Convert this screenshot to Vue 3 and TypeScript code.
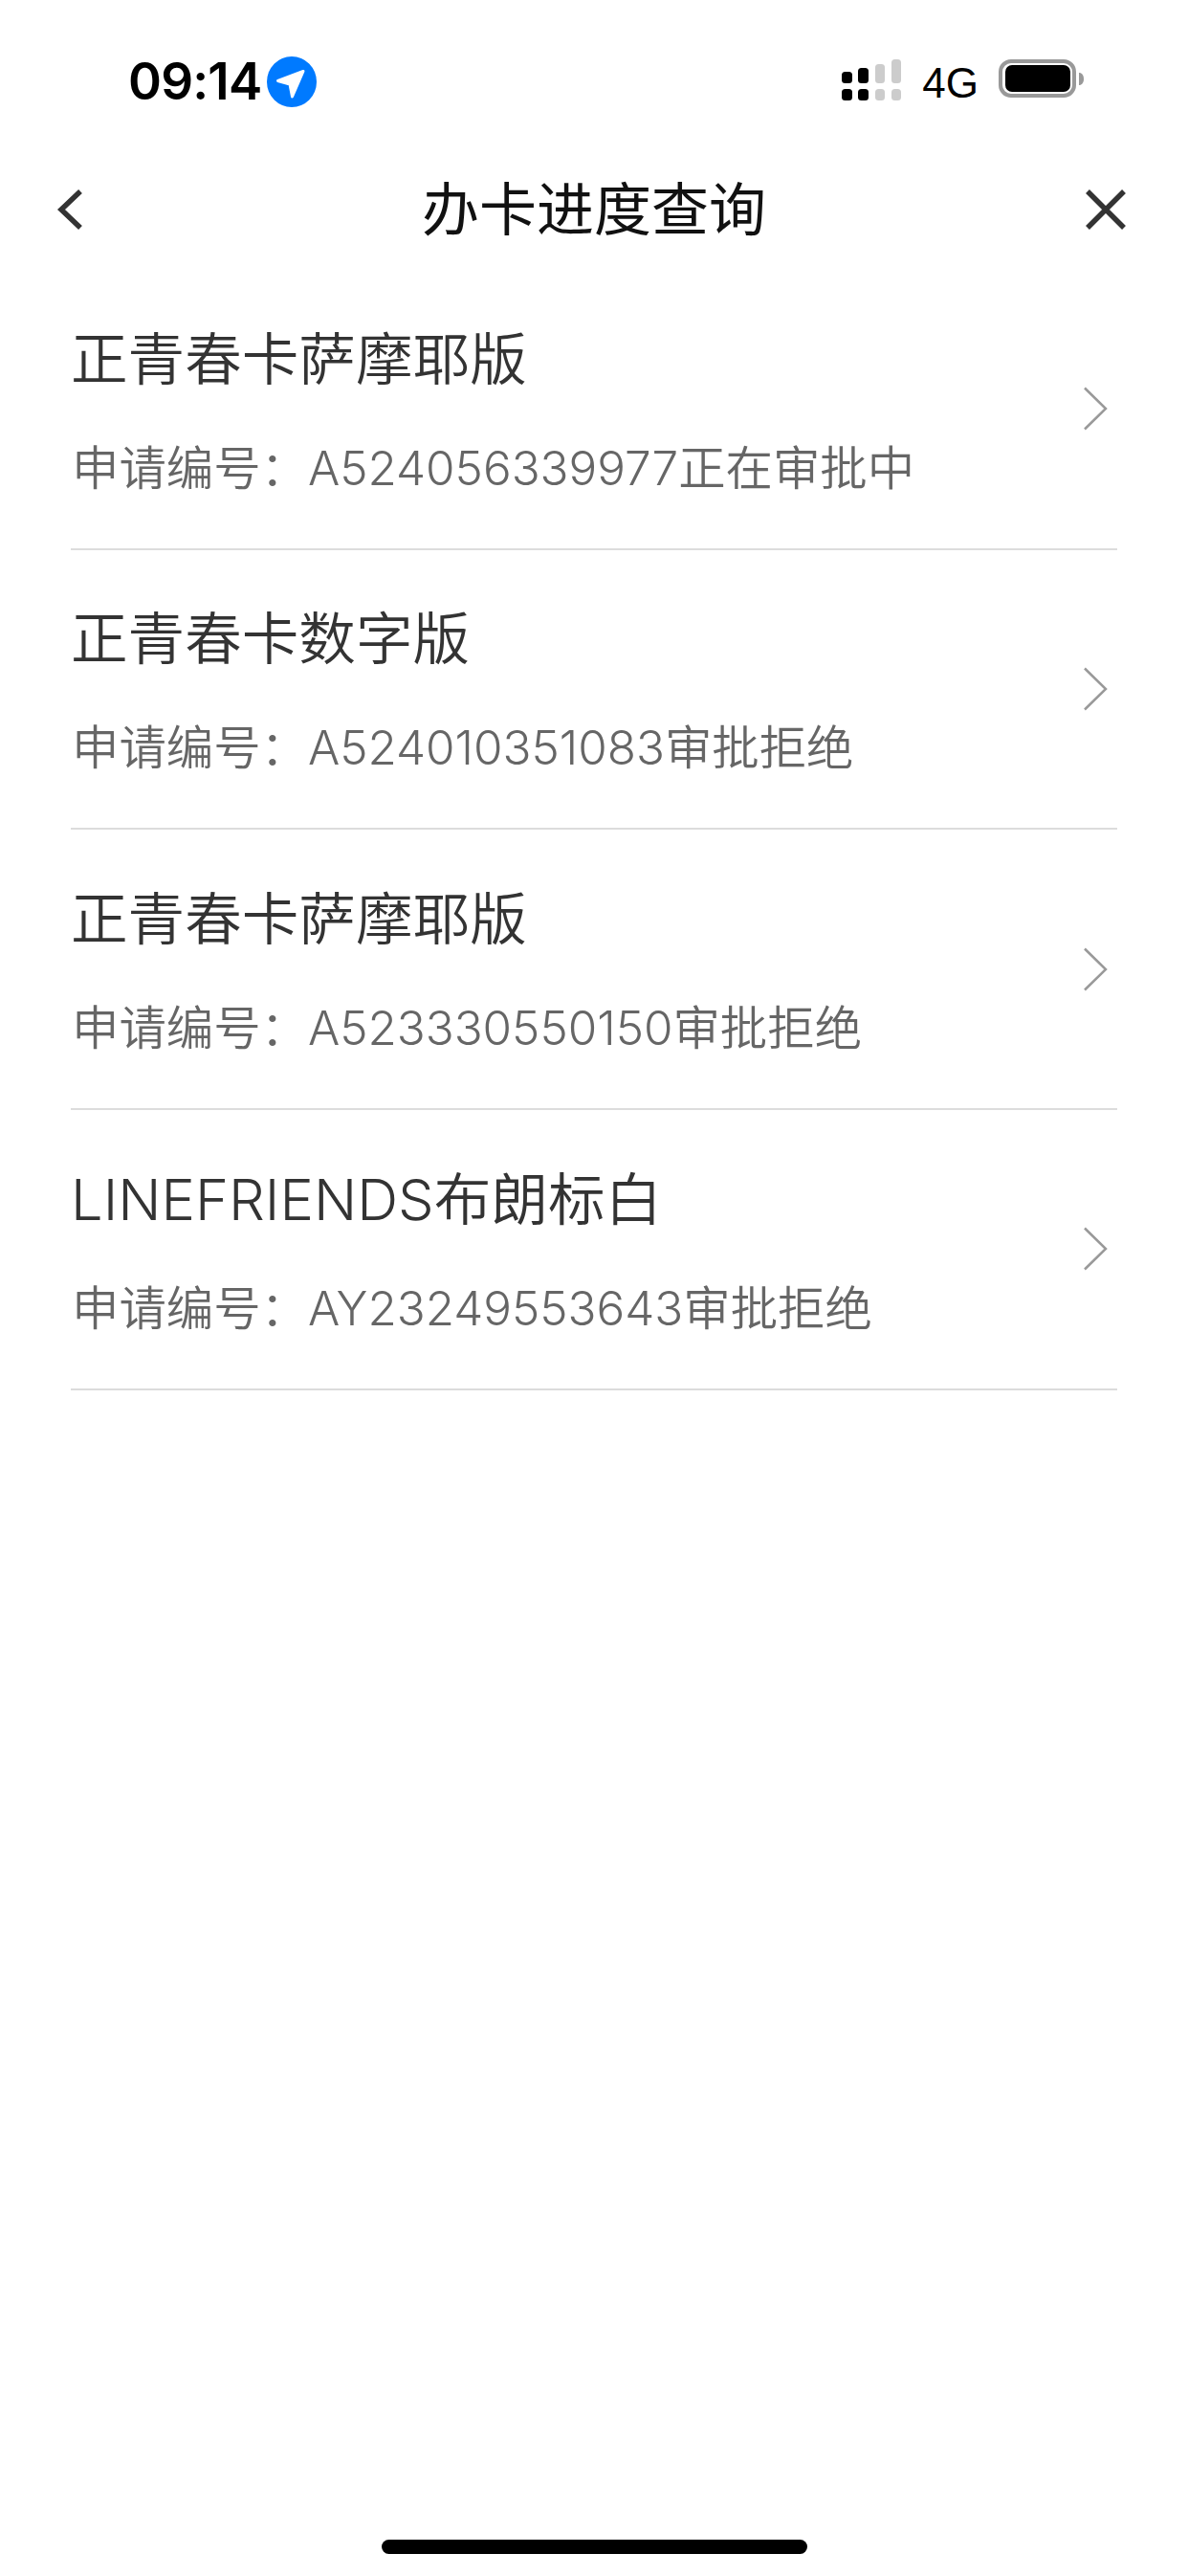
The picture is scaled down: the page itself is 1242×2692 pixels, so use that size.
<script setup lang="ts">
interface CardApply {
  latin?: string
  name: string
  code: string
  status: string
}

const applies: CardApply[] = [
  { name: '正青春卡萨摩耶版', code: 'A524056339977', status: '正在审批中' },
  { name: '正青春卡数字版', code: 'A524010351083', status: '审批拒绝' },
  { name: '正青春卡萨摩耶版', code: 'A523330550150', status: '审批拒绝' },
  { latin: 'LINEFRIENDS', name: '布朗标白', code: 'AY23249553643', status: '审批拒绝' }
]
</script>

<template>
  <div class="page">
    <div class="status-bar">
      <div class="status-left">
        <span class="time">09:14</span>
        <svg class="location" width="52" height="53" viewBox="0 0 52 53">
          <ellipse cx="26" cy="26.5" rx="26" ry="26.5" fill="#007aff" />
          <path d="M38 15.5 11.5 25.5 24 29 26.5 42z" fill="#fff" stroke="#fff" stroke-width="3" stroke-linejoin="round" />
        </svg>
      </div>
      <div class="status-right">
        <svg width="62" height="43" viewBox="0 0 62 43" class="signal">
          <rect x="0" y="13" width="11" height="12" rx="3.5" fill="#000" />
          <rect x="17" y="9" width="11" height="16" rx="3.5" fill="#000" />
          <rect x="35" y="5" width="10" height="20" rx="3.5" fill="#ccc" />
          <rect x="52" y="0" width="10" height="25" rx="3.5" fill="#ccc" />
          <rect x="0" y="31" width="11" height="12" rx="3.5" fill="#000" />
          <rect x="17" y="31" width="11" height="12" rx="3.5" fill="#000" />
          <rect x="35" y="31" width="10" height="12" rx="3.5" fill="#ccc" />
          <rect x="52" y="31" width="10" height="12" rx="3.5" fill="#ccc" />
        </svg>
        <span class="network">4G</span>
        <svg width="89" height="40" viewBox="0 0 89 40" class="battery">
          <rect x="2" y="2" width="77" height="36" rx="11" fill="none" stroke="#999" stroke-width="4" />
          <rect x="7" y="6" width="68" height="28" rx="7" fill="#000" />
          <path d="M84 14c3 0 5 2.500 5 6.500s-2 6.500-5 6.500z" fill="#999" />
        </svg>
      </div>
    </div>

    <header class="nav">
      <svg class="nav-back" width="28" height="46" viewBox="0 0 28 46">
        <path d="M25 4 5 23l20 19" fill="none" stroke="#333" stroke-width="5.500" />
      </svg>
      <h1 class="nav-title">办卡进度查询</h1>
      <svg class="nav-close" width="44" height="44" viewBox="0 0 44 44">
        <path d="M3 3l38 38M41 3 3 41" fill="none" stroke="#333" stroke-width="5.500" />
      </svg>
    </header>

    <ul class="list">
      <li v-for="item in applies" :key="item.code" class="row">
        <div class="row-text">
          <div class="row-name"><span v-if="item.latin" class="latin">{{ item.latin }}</span>{{ item.name }}</div>
          <div class="row-sub">申请编号：<span class="code">{{ item.code }}</span>{{ item.status }}</div>
        </div>
        <svg class="row-arrow" width="26" height="46" viewBox="0 0 26 46">
          <path d="M2 1.500 24 23 2 44.500" fill="none" stroke="#999" stroke-width="2.500" />
        </svg>
      </li>
    </ul>

    <div class="home-indicator"></div>
  </div>
</template>

<style>
html,
body {
  margin: 0;
  background: #fff;
}
</style>

<style scoped>
.page {
  width: 1242px;
  height: 2692px;
  display: flex;
  flex-direction: column;
  overflow: hidden;
  background: #fff;
  font-family: Inter, "Noto Sans CJK SC", sans-serif;
}

.status-bar {
  height: 171px;
  padding: 59px 109px 0 134px;
  box-sizing: border-box;
  display: flex;
  justify-content: space-between;
  align-items: flex-start;
}

.status-left {
  display: flex;
  align-items: center;
  gap: 6px;
}

.time {
  font-size: 53px;
  line-height: 53px;
  letter-spacing: -0.8px;
  font-weight: 600;
  color: #000;
}

.status-right {
  display: flex;
  align-items: flex-start;
  gap: 22px;
  margin-top: 3px;
}

.network {
  font-family: "Liberation Sans", sans-serif;
  font-size: 44px;
  line-height: 43px;
  color: #000;
  margin-top: 3px;
  margin-right: -1px;
}

.nav {
  height: 96px;
  padding: 0 66px;
  display: grid;
  grid-template-columns: 1fr auto 1fr;
  align-items: center;
}

.nav-back {
  margin-left: -7px;
}

.nav-title {
  margin: 0;
  font-size: 60px;
  line-height: 96px;
  font-weight: 400;
  color: #111;
}

.nav-close {
  justify-self: end;
  margin-right: -2px;
}

.list {
  list-style: none;
  margin: 15px 74px 0;
  padding: 0;
}

.row {
  height: 292.67px;
  box-sizing: border-box;
  border-bottom: 2px solid #dcdcdc;
  display: flex;
  justify-content: space-between;
  align-items: center;
}

.row-text {
  display: flex;
  flex-direction: column;
  gap: 42px;
  padding-bottom: 3px;
}

.row-name {
  font-size: 59.6px;
  line-height: 84px;
  font-weight: 350;
  color: #333;
}

.row-sub {
  font-size: 49.4px;
  line-height: 60px;
  font-weight: 350;
  color: #666;
  padding-left: 1px;
}

.row-arrow {
  margin-right: 10px;
}

.home-indicator {
  width: 445px;
  height: 15px;
  border-radius: 8px;
  background: #000;
  margin: auto auto 23px;
}
</style>
